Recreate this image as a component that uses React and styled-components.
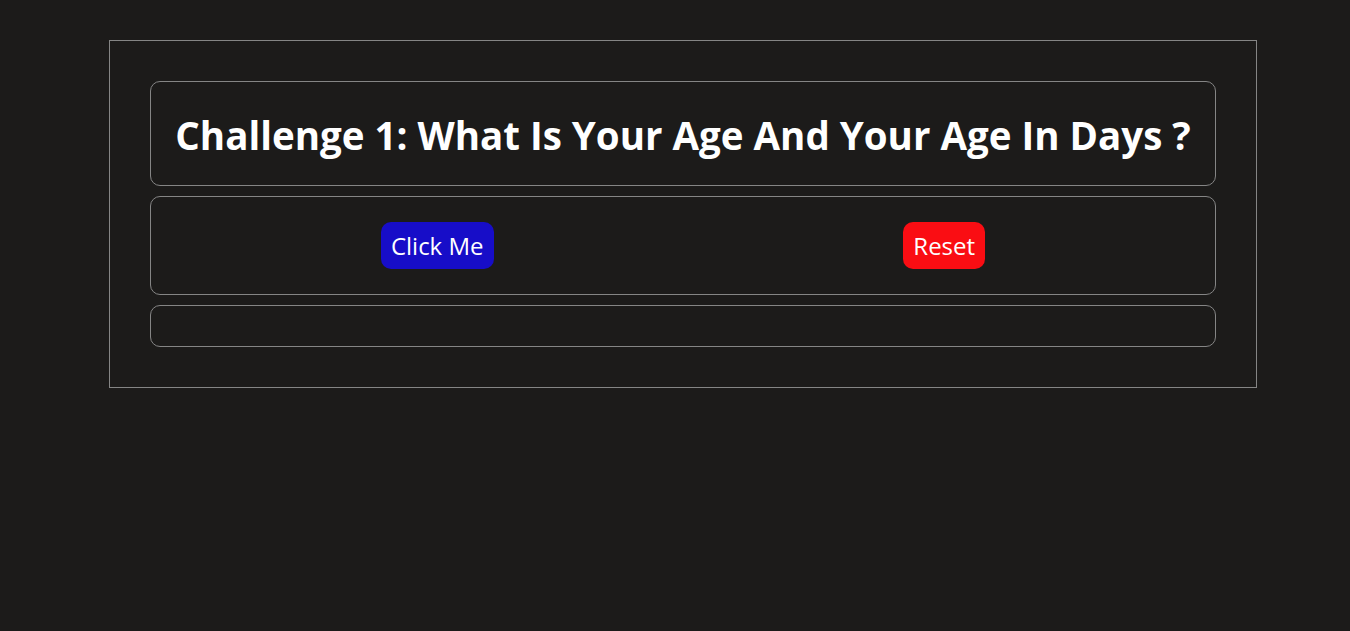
import React from "react";
import styled, { createGlobalStyle } from "styled-components";

const GlobalStyle = createGlobalStyle`
  body {
    margin: 0;
    background: #1c1b1a;
    color: #ffffff;
    font-family: "Open Sans", "Noto Sans", sans-serif;
  }
`;

const Container = styled.div`
  width: 1148px;
  box-sizing: border-box;
  margin: 40px 0 0 109px;
  padding: 40px;
  border: 1px solid #858585;
  display: flex;
  flex-direction: column;
  gap: 10px;
`;

const Box = styled.div`
  border: 1px solid #858585;
  border-radius: 10px;
  box-sizing: border-box;
  height: ${(p) => p.h}px;
`;

const TitleBox = styled(Box)`
  display: flex;
  align-items: center;
  justify-content: center;
  padding-top: 3px;
`;

const Title = styled.h2`
  margin: 0;
  font-size: 38.5px;
  font-weight: 700;
  white-space: nowrap;
`;

const ButtonRow = styled(Box)`
  display: flex;
  align-items: center;
  justify-content: space-around;
  padding: 0 25px;
`;

const Button = styled.button`
  border: none;
  border-radius: 10px;
  background: ${(p) => p.bg};
  color: #ffffff;
  font-family: "Open Sans", "Noto Sans", sans-serif;
  font-size: 24px;
  height: 47px;
  padding: 0 10px;
  cursor: pointer;
`;

export default function App() {
  return (
    <>
      <GlobalStyle />
      <Container>
        <TitleBox h={105}>
          <Title>Challenge 1: What Is Your Age And Your Age In Days ?</Title>
        </TitleBox>
        <ButtonRow h={99}>
          <Button bg="#170dc8">Click Me</Button>
          <Button bg="#fa0d13">Reset</Button>
        </ButtonRow>
        <Box h={42} />
      </Container>
    </>
  );
}
